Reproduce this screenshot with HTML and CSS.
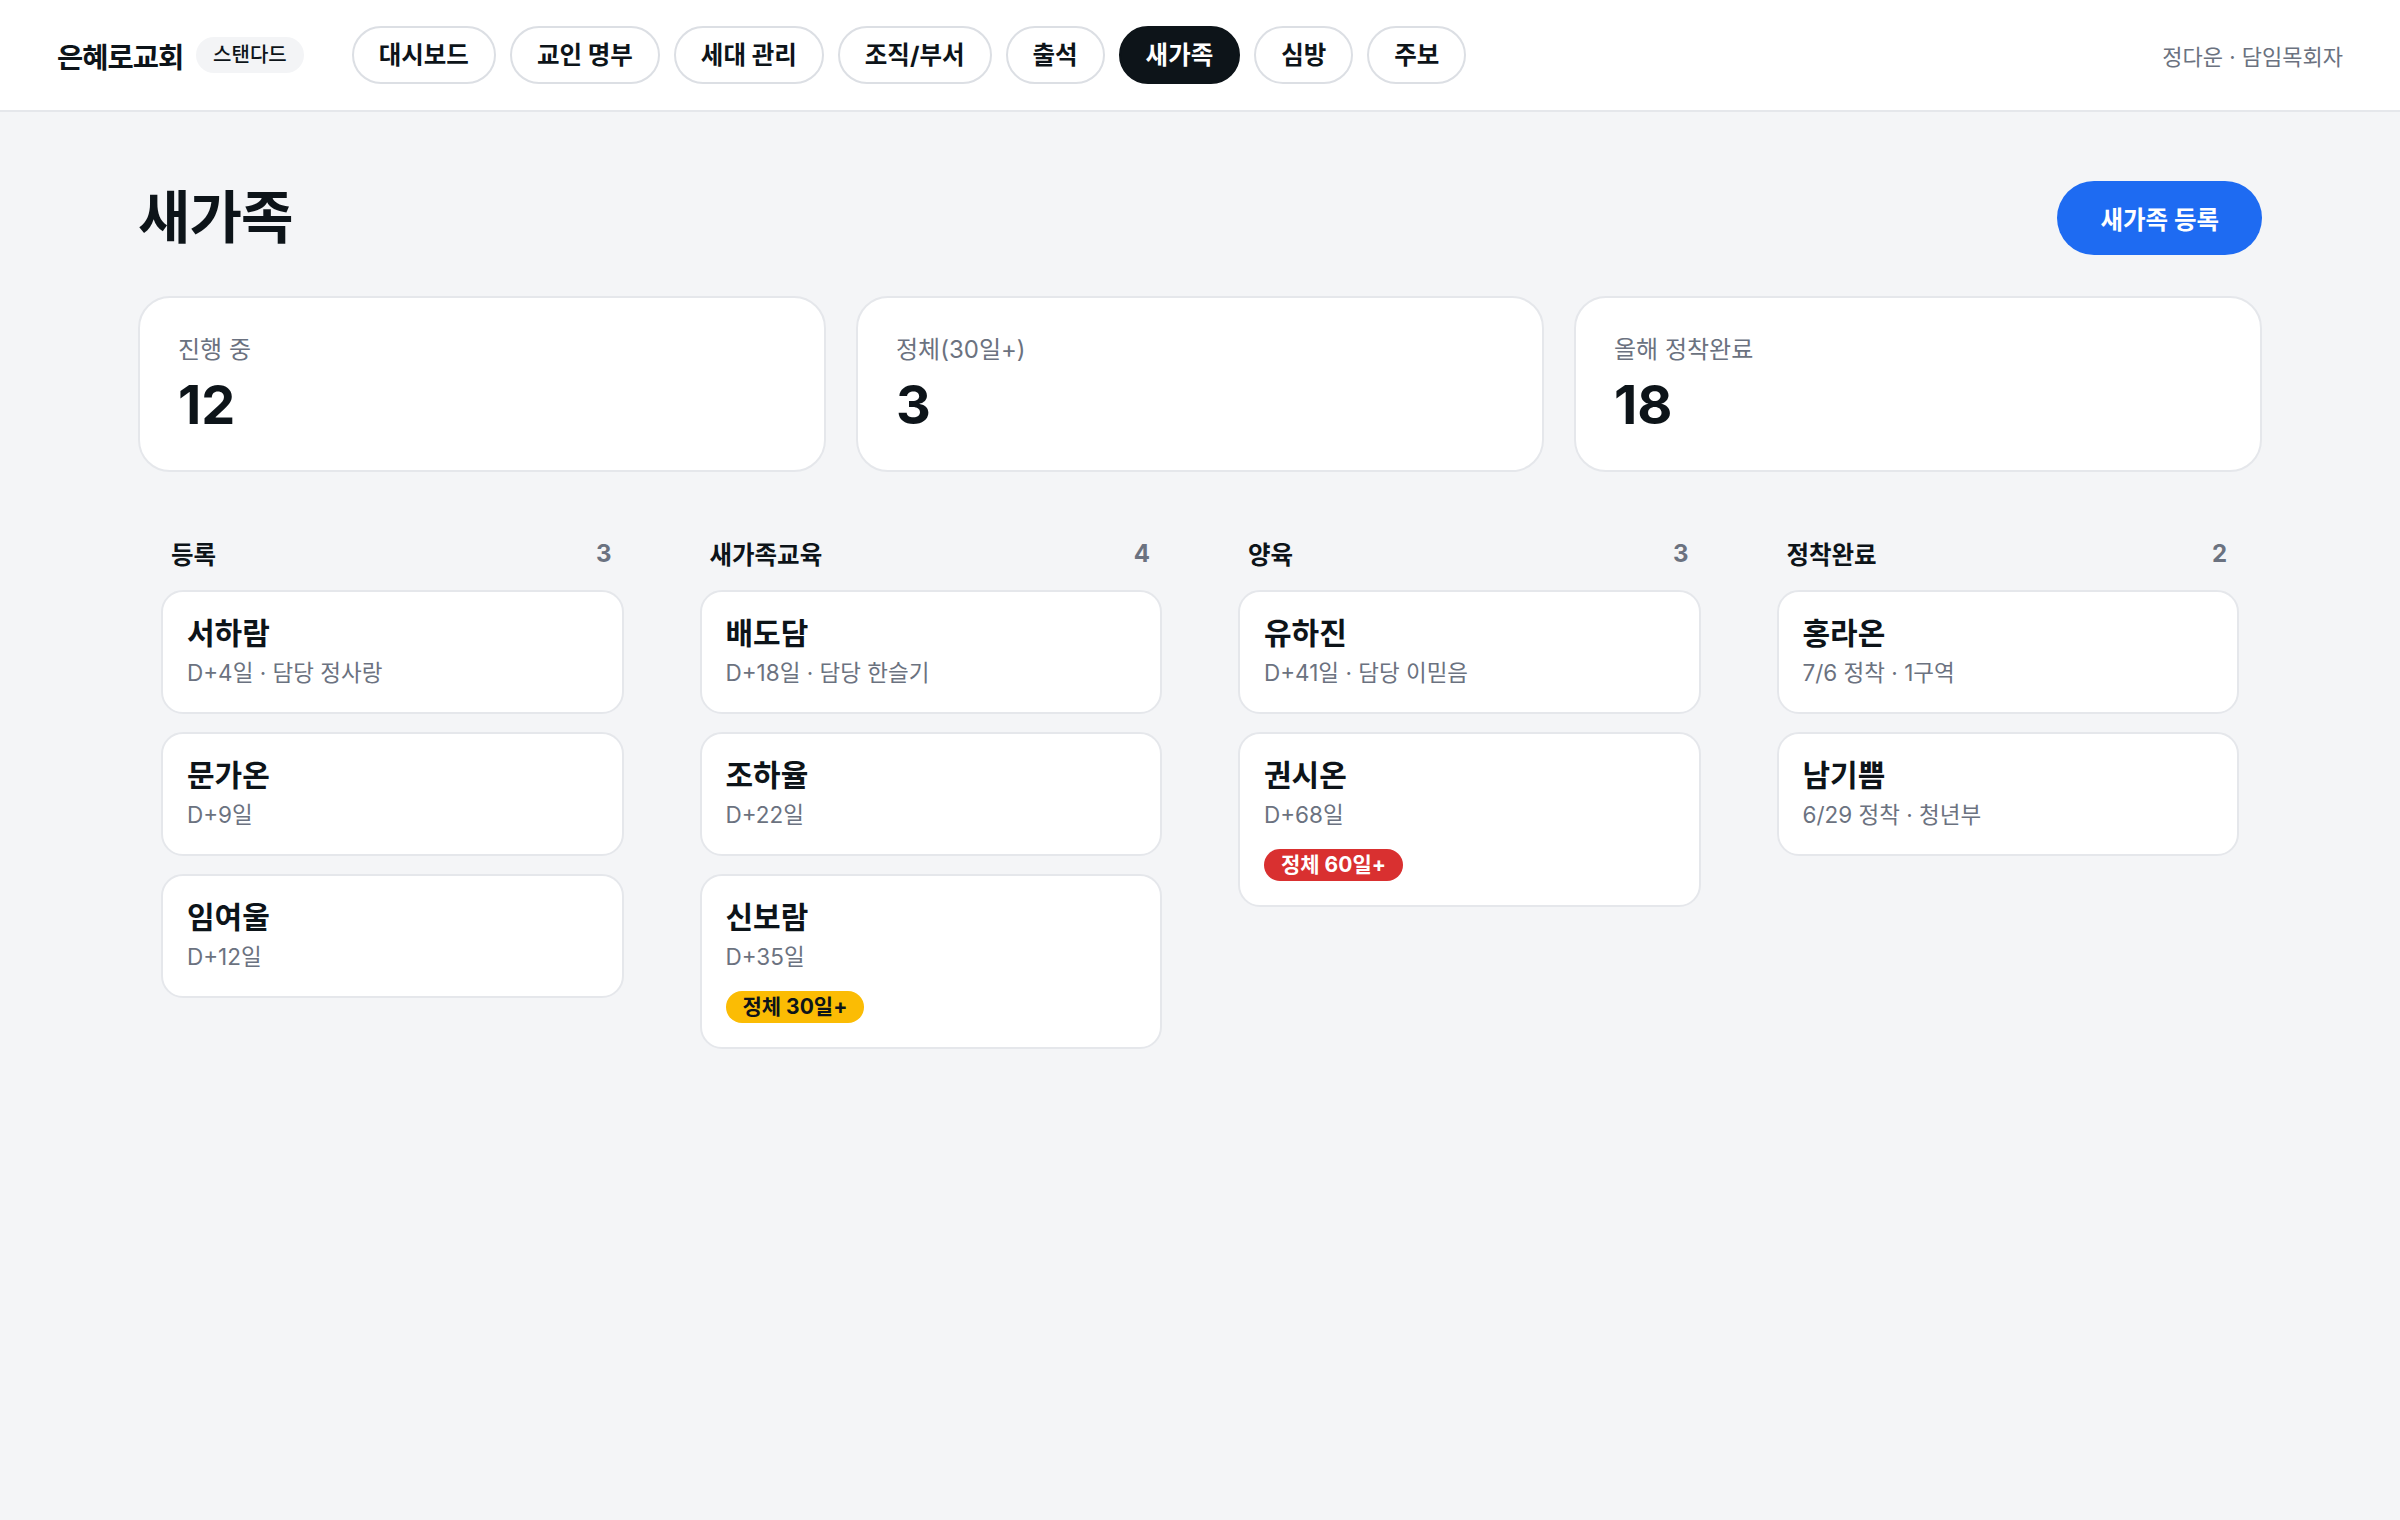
FILE: index.html
```html
<!DOCTYPE html>
<html lang="ko">
<head>
<meta charset="utf-8">
<title>새가족</title>
<link rel="stylesheet" href="styles.css">
</head>
<body>
<header class="topbar">
  <div class="brand">
    <span class="brand-name">은혜로교회</span>
    <span class="plan">스탠다드</span>
  </div>
  <nav class="nav">
    <a class="nav-item">대시보드</a>
    <a class="nav-item">교인 명부</a>
    <a class="nav-item">세대 관리</a>
    <a class="nav-item">조직/부서</a>
    <a class="nav-item">출석</a>
    <a class="nav-item active">새가족</a>
    <a class="nav-item">심방</a>
    <a class="nav-item">주보</a>
  </nav>
  <div class="user">정다운 · 담임목회자</div>
</header>

<main class="main">
  <div class="title-row">
    <h1 class="title">새가족</h1>
    <button class="primary-btn">새가족 등록</button>
  </div>

  <section class="stats">
    <div class="stat">
      <div class="stat-label">진행 중</div>
      <div class="stat-value">12</div>
    </div>
    <div class="stat">
      <div class="stat-label">정체(30일+)</div>
      <div class="stat-value">3</div>
    </div>
    <div class="stat">
      <div class="stat-label">올해 정착완료</div>
      <div class="stat-value">18</div>
    </div>
  </section>

  <section class="board">
    <div class="column">
      <div class="col-head"><span class="col-title">등록</span><span class="col-count">3</span></div>
      <div class="cards">
        <div class="card"><div class="name">서하람</div><div class="meta">D+4일 · 담당 정사랑</div></div>
        <div class="card"><div class="name">문가온</div><div class="meta">D+9일</div></div>
        <div class="card"><div class="name">임여울</div><div class="meta">D+12일</div></div>
      </div>
    </div>
    <div class="column">
      <div class="col-head"><span class="col-title">새가족교육</span><span class="col-count">4</span></div>
      <div class="cards">
        <div class="card"><div class="name">배도담</div><div class="meta">D+18일 · 담당 한슬기</div></div>
        <div class="card"><div class="name">조하율</div><div class="meta">D+22일</div></div>
        <div class="card"><div class="name">신보람</div><div class="meta">D+35일</div><span class="tag tag-warn">정체 30일+</span></div>
      </div>
    </div>
    <div class="column">
      <div class="col-head"><span class="col-title">양육</span><span class="col-count">3</span></div>
      <div class="cards">
        <div class="card"><div class="name">유하진</div><div class="meta">D+41일 · 담당 이믿음</div></div>
        <div class="card"><div class="name">권시온</div><div class="meta">D+68일</div><span class="tag tag-danger">정체 60일+</span></div>
      </div>
    </div>
    <div class="column">
      <div class="col-head"><span class="col-title">정착완료</span><span class="col-count">2</span></div>
      <div class="cards">
        <div class="card"><div class="name">홍라온</div><div class="meta">7/6 정착 · 1구역</div></div>
        <div class="card"><div class="name">남기쁨</div><div class="meta">6/29 정착 · 청년부</div></div>
      </div>
    </div>
  </section>
</main>
</body>
</html>
```

FILE: styles.css
```css
* { box-sizing: border-box; }

html, body {
  margin: 0;
  padding: 0;
}

body {
  background: #f4f5f7;
  color: #0d1419;
  font-family: "Inter", "Noto Sans CJK KR", sans-serif;
  min-height: 1520px;
}

.topbar {
  height: 112px;
  background: #ffffff;
  border-bottom: 2px solid #e5e7eb;
  display: flex;
  align-items: center;
  padding: 0 57px;
}

.brand {
  display: flex;
  align-items: center;
  gap: 13px;
}

.brand-name {
  font-size: 28.5px;
  font-weight: 700;
  letter-spacing: -1px;
}

.plan {
  background: #f3f4f6;
  border-radius: 999px;
  font-size: 20px;
  font-weight: 500;
  padding: 0 17px;
  height: 36px;
  line-height: 36px;
}

.nav {
  display: flex;
  gap: 14px;
  margin-left: 48px;
}

.nav-item {
  height: 58px;
  line-height: 54px;
  padding: 0 25px;
  border: 2px solid #dcdfe4;
  border-radius: 999px;
  font-size: 24.5px;
  font-weight: 700;
  color: #0d1419;
  background: #fff;
}

.nav-item.active {
  background: #0d1419;
  border-color: #0d1419;
  color: #fff;
}

.user {
  margin-left: auto;
  font-size: 22px;
  color: #6b7280;
}

.main {
  padding: 69px 138px 0;
}

.title-row {
  display: flex;
  align-items: center;
  justify-content: space-between;
}

.title {
  margin: 0;
  font-size: 57px;
  font-weight: 700;
  letter-spacing: -1px;
  line-height: 74px;
}

.primary-btn {
  background: #1e6bf2;
  color: #fff;
  border: none;
  border-radius: 999px;
  height: 74px;
  padding: 0 43px;
  font-family: inherit;
  font-size: 24.5px;
  font-weight: 700;
}

.stats {
  margin-top: 41px;
  display: grid;
  grid-template-columns: repeat(3, 1fr);
  gap: 30px;
}

.stat {
  background: #fff;
  border: 2px solid #e5e7eb;
  border-radius: 32px;
  padding: 36px 38px 35px;
  height: 176px;
}

.stat-label {
  font-size: 24px;
  line-height: 32px;
  color: #6b7280;
}

.stat-value {
  margin-top: 9px;
  font-size: 54px;
  line-height: 60px;
  font-weight: 700;
}

.board {
  margin-top: 66px;
  display: grid;
  grid-template-columns: repeat(4, 1fr);
  gap: 30px;
  align-items: start;
}

.column {
  padding: 0 23px;
}

.col-head {
  display: flex;
  justify-content: space-between;
  align-items: center;
  padding: 0 12px 0 10px;
  height: 30px;
  margin-bottom: 22px;
}

.col-title {
  font-size: 24.5px;
  font-weight: 700;
}

.col-count {
  font-size: 24px;
  font-weight: 700;
  color: #6b7280;
}

.cards {
  display: flex;
  flex-direction: column;
  gap: 18px;
}

.card {
  background: #fff;
  border: 2px solid #e5e7eb;
  border-radius: 22px;
  padding: 22px 24px 24px;
  display: flex;
  flex-direction: column;
  align-items: flex-start;
}

.name {
  font-size: 30px;
  line-height: 38px;
  font-weight: 700;
}

.meta {
  margin-top: 6px;
  font-size: 22.5px;
  line-height: 30px;
  color: #6b7280;
}

.tag {
  margin-top: 19px;
  height: 32px;
  line-height: 32px;
  padding: 0 17px;
  border-radius: 999px;
  font-size: 21px;
  font-weight: 700;
}

.tag-warn {
  background: #fbbc04;
  color: #0d1419;
}

.tag-danger {
  background: #d93030;
  color: #fff;
}
```
